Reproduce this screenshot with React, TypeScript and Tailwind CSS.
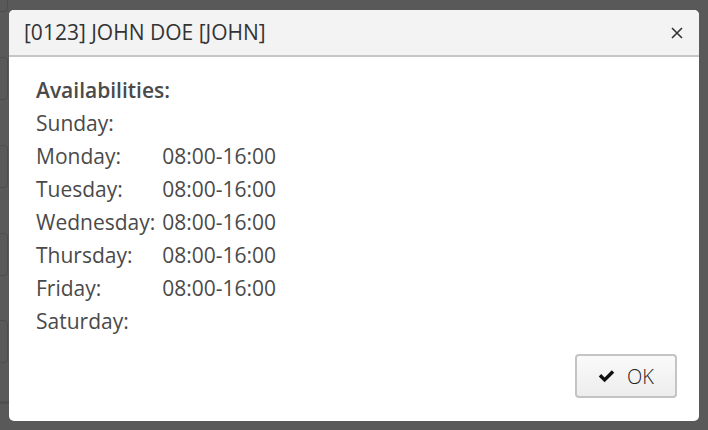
import React from "react";

const days = [
  { day: "Sunday:", hours: "" },
  { day: "Monday:", hours: "08:00-16:00" },
  { day: "Tuesday:", hours: "08:00-16:00" },
  { day: "Wednesday:", hours: "08:00-16:00" },
  { day: "Thursday:", hours: "08:00-16:00" },
  { day: "Friday:", hours: "08:00-16:00" },
  { day: "Saturday:", hours: "" },
];

export default function App() {
  return (
    <div className="relative w-[708px] h-[430px] overflow-hidden bg-[#595959] font-['Open_Sans',sans-serif]">
      {/* page behind the overlay */}
      <div className="absolute left-[-20px] top-[-20px] w-[28px] h-[32px] rounded border border-[#4d4d4d]" />
      <div className="absolute left-[-20px] top-[57px] w-[28px] h-[43px] rounded border border-[#4d4d4d]" />
      <div className="absolute left-[-20px] top-[145px] w-[28px] h-[43px] rounded border border-[#4d4d4d]" />
      <div className="absolute left-[-20px] top-[233px] w-[28px] h-[43px] rounded border border-[#4d4d4d]" />
      <div className="absolute left-[-20px] top-[320px] w-[28px] h-[43px] rounded border border-[#4d4d4d]" />
      <div className="absolute left-0 top-[401px] w-[9px] h-[3px] bg-[#4f4f4f]" />

      <div className="absolute left-[9px] top-[10px] w-[690px] h-[411px] flex flex-col rounded-[5px] bg-white overflow-hidden">
        <div className="flex items-center justify-between h-[47px] px-[15px] bg-[#f3f3f3] border-b-2 border-[#c6c6c6]">
          <span className="text-[21px] text-[#333]">[0123] JOHN DOE [JOHN]</span>
          <button className="text-[#333] mr-[1px]">
            <svg width="12" height="12" viewBox="0 0 12 12" stroke="currentColor" strokeWidth="1.6">
              <path d="M1 1L11 11M11 1L1 11" />
            </svg>
          </button>
        </div>

        <div className="flex-1 flex flex-col px-[27px] pt-[17px] text-[21px] text-[#4a4a4a] leading-[33px]">
          <div className="font-semibold">Availabilities:</div>
          <table className="border-collapse">
            <tbody>
              {days.map((d) => (
                <tr key={d.day}>
                  <td className="p-0 pr-[7px] w-[1px] whitespace-nowrap">{d.day}</td>
                  <td className="p-0">{d.hours}</td>
                </tr>
              ))}
            </tbody>
          </table>
          <div className="flex justify-end mt-[16px] -mr-[5px]">
            <button className="flex items-center gap-[12px] h-[44px] w-[102px] justify-center rounded-[4px] border-2 border-[#c4c4c4] bg-gradient-to-b from-[#fafafa] to-[#ededed] text-[20px] font-light text-[#222]">
              <svg width="17" height="14" viewBox="0 0 18 14" fill="#111">
                <path d="M0.8 7.6L3.4 5L7 8.5L14.6 0.9L17.2 3.5L7 13.7Z" />
              </svg>
              <span>OK</span>
            </button>
          </div>
        </div>
      </div>
    </div>
  );
}
